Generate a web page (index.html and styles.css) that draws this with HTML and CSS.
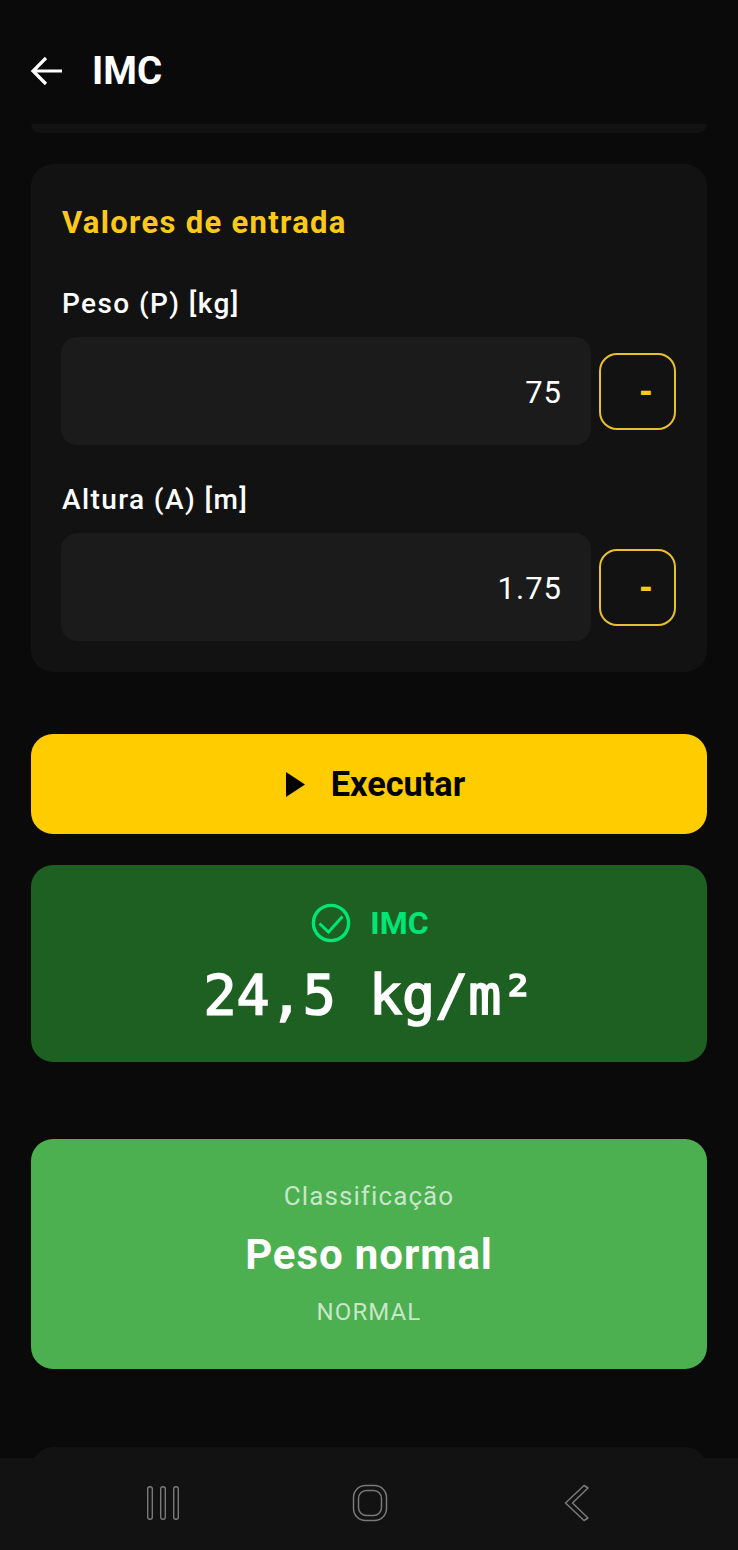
FILE: index.html
```html
<!DOCTYPE html>
<html lang="pt">
<head>
<meta charset="utf-8">
<title>IMC</title>
<link rel="stylesheet" href="styles.css">
</head>
<body>
<div class="screen">
  <header class="appbar">
    <svg class="back" width="34" height="34" viewBox="0 0 34 34"><path d="M32 17H3M16 4 3 17l13 13" fill="none" stroke="#fff" stroke-width="3.2"/></svg>
    <h1 class="title">IMC</h1>
  </header>
  <main class="content">
    <div class="sliver"></div>
    <section class="card">
      <h2 class="card-title">Valores de entrada</h2>
      <div class="field">
        <label class="label">Peso (P) [kg]</label>
        <div class="row">
          <div class="input">75</div>
          <div class="unit"><span class="unit-text">-</span></div>
        </div>
      </div>
      <div class="field">
        <label class="label">Altura (A) [m]</label>
        <div class="row">
          <div class="input">1.75</div>
          <div class="unit"><span class="unit-text">-</span></div>
        </div>
      </div>
    </section>
    <button class="run">
      <svg width="19" height="25" viewBox="0 0 19 25"><path d="M0 0 19 12.500 0 25Z" fill="#000"/></svg>
      <span>Executar</span>
    </button>
    <section class="result">
      <div class="result-head">
        <svg width="40" height="40" viewBox="0 0 40 40"><circle cx="20" cy="20" r="17.6" fill="none" stroke="#00e676" stroke-width="3.4"/><path d="M8.500 20.500 17.500 29 31.500 13.500" fill="none" stroke="#00e676" stroke-width="3"/></svg>
        <span class="result-label">IMC</span>
      </div>
      <div class="result-value">24,5 kg/m²</div>
    </section>
    <section class="class-card">
      <div class="class-label">Classificação</div>
      <div class="class-value">Peso normal</div>
      <div class="class-tag">NORMAL</div>
    </section>
    <div class="next-card"></div>
  </main>
  <nav class="navbar">
    <svg width="34" height="36" viewBox="0 0 34 36" fill="none" stroke="#7a7a7a" stroke-width="1.4"><rect x="1.700" y="1.700" width="4.600" height="32.600" rx="2.200"/><rect x="14.700" y="1.700" width="4.600" height="32.600" rx="2.200"/><rect x="27.700" y="1.700" width="4.600" height="32.600" rx="2.200"/></svg>
    <svg class="nav-home" width="36" height="38" viewBox="0 0 36 38" fill="none" stroke="#7a7a7a" stroke-width="1.5"><rect x="1.500" y="1.500" width="33" height="35" rx="12"/><rect x="6.500" y="6.500" width="23" height="25" rx="8"/></svg>
    <svg width="26" height="38" viewBox="0 0 26 38" fill="none" stroke="#7a7a7a" stroke-width="1.5" stroke-linejoin="round"><path d="M20 1.500 24 4 8.500 19 24 34 20 36.500 1.500 19Z"/></svg>
  </nav>
</div>
</body>
</html>
```
FILE: styles.css
```css
* { box-sizing: border-box; }
html, body { margin: 0; padding: 0; }
body { background: #0a0a0a; font-family: Roboto, "Liberation Sans", sans-serif; color: #fff; }
.screen { position: relative; width: 738px; height: 1550px; overflow: hidden; background: #0a0a0a; }
.appbar { display: flex; align-items: center; gap: 28px; height: 124px; padding: 17px 0 0 30px; }
.back { display: block; }
.title { margin: 0; font-size: 38.500px; font-weight: 700; line-height: 44px; }
.content { display: flex; flex-direction: column; padding: 0 31px; }
.sliver { height: 9px; margin: 0 0 31px; border-radius: 0 0 22px 22px; background: #121212; }
.card { height: 508px; padding: 39px 31px 0 30px; border-radius: 22px; background: #121212; }
.card-title { margin: 0 0 45px 1px; font-size: 31px; line-height: 40px; font-weight: 700; color: #fcc919; letter-spacing: 1.300px; }
.field { margin-bottom: 39px; }
.label { display: block; margin: 0 0 17px 1px; font-size: 28px; line-height: 32px; font-weight: 500; letter-spacing: 1.400px; }
.row { display: flex; align-items: center; gap: 8px; }
.input { flex: 1; height: 108px; padding-right: 29px; border-radius: 16px; background: #1b1b1b; font-size: 31px; line-height: 111px; text-align: right; letter-spacing: 1px; }
.unit { display: flex; align-items: center; justify-content: center; width: 77px; height: 77px; border: 2px solid #e8c02a; border-radius: 18px; }
.unit-text { padding-left: 17px; font-size: 33px; font-weight: 900; color: #fcc919; }
.run { display: flex; align-items: center; justify-content: center; gap: 26px; width: 100%; height: 100px; margin-top: 62px; padding: 0 0 0 13px; border: 0; border-radius: 22px; background: #ffcc00; color: #000; font-family: inherit; font-size: 34.300px; font-weight: 700; }
.result { height: 197px; margin-top: 31px; padding-top: 38px; border-radius: 22px; background: #1e5f22; text-align: center; }
.result-head { display: flex; align-items: center; justify-content: center; gap: 19px; height: 40px; padding-left: 2px; }
.result-label { font-size: 32px; font-weight: 700; color: #00e676; }
.result-value { margin-top: 17px; font-family: "DejaVu Sans Mono", "Liberation Mono", monospace; font-size: 55px; line-height: 70px; font-weight: 400; -webkit-text-stroke: 1.600px #fff; }
.class-card { height: 230px; margin-top: 77px; padding-top: 40px; border-radius: 22px; background: #4caf50; text-align: center; }
.class-label { font-size: 26px; line-height: 34px; letter-spacing: 1.100px; color: #c8e6c9; }
.class-value { margin-top: 16px; font-size: 42px; line-height: 52px; font-weight: 700; letter-spacing: .900px; }
.class-tag { margin-top: 16px; font-size: 24px; line-height: 30px; letter-spacing: 1.100px; color: #c8e6c9; }
.next-card { height: 120px; margin-top: 78px; border-radius: 22px; background: #121212; }
.navbar { position: absolute; left: 0; right: 0; bottom: 0; height: 92px; display: flex; justify-content: space-between; align-items: center; padding: 0 148px 2px 146px; background: #121212; }
.nav-home { margin-right: 5px; }
```
